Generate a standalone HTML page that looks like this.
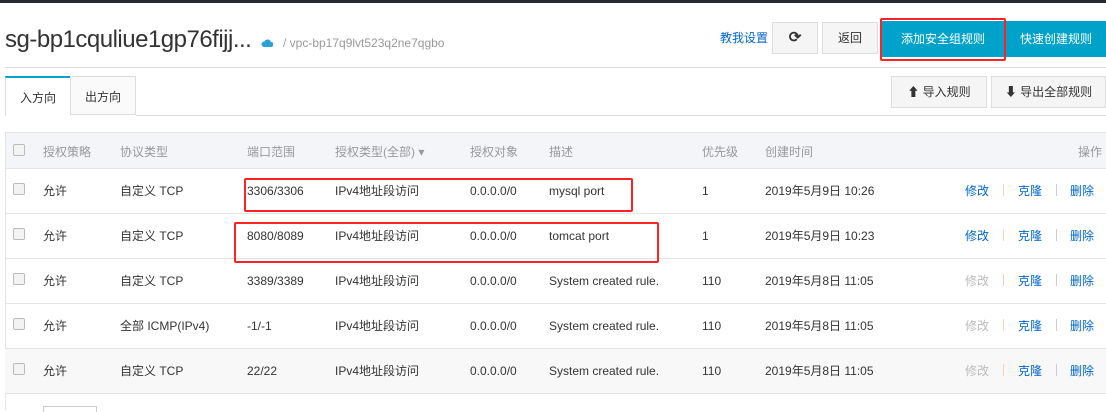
<!DOCTYPE html>
<html><head><meta charset="utf-8"><style>
*{margin:0;padding:0;box-sizing:border-box}
body{width:1106px;height:410px;overflow:hidden;background:#fff;font-family:"Liberation Sans","Noto Sans CJK SC",sans-serif;font-size:12px;color:#333;position:relative}
.a{position:absolute;white-space:nowrap}
.btn{position:absolute;border:1px solid #ddd;background:#f5f5f5;text-align:center;color:#333;font-size:12px}
.row{position:absolute;left:5px;width:1101px;height:45px;border-bottom:1px solid #e2e4e8}
.cb{position:absolute;left:8px;width:12px;height:12px;border:1px solid #bbb;border-radius:2px;background:#f3f3f3}
.c{position:absolute;top:13px;height:18px;line-height:18px;white-space:nowrap}
.lk{color:#06c}
.dis{color:#bbb}
.sep{position:absolute;top:15px;width:1px;height:12px}
.red{position:absolute;border:2px solid #f22;border-radius:2px}
</style></head><body>
<div class="a" style="left:0;top:0;width:1106px;height:3px;background:#262b33"></div>
<div class="a" style="left:5px;top:26px;font-size:24px;letter-spacing:-0.5px;color:#333">sg-bp1cquliue1gp76fijj...</div>
<svg class="a" style="left:261px;top:38px" width="12" height="9" viewBox="0 0 12 9"><path d="M3 9h7a2.5 2.5 0 0 0 0-5 3.5 3.5 0 0 0-6.5-.5A2.7 2.7 0 0 0 3 9z" fill="#2aa0d8"/></svg>
<div class="a" style="left:283px;top:36px;font-size:12px;color:#999">/ vpc-bp17q9lvt523q2ne7qgbo</div>
<div class="a lk" style="left:720px;top:29px;font-size:12px">教我设置</div>
<div class="btn" style="left:772px;top:22px;width:46px;height:32px;line-height:30px;font-size:15px;font-weight:bold">⟳</div>
<div class="btn" style="left:822px;top:22px;width:56px;height:32px;line-height:30px">返回</div>
<div class="a" style="left:882px;top:21px;width:122px;height:36px;background:#00a2ca;color:#fff;text-align:center;line-height:36px;font-size:12px">添加安全组规则</div>
<div class="a" style="left:1006px;top:21px;width:100px;height:36px;background:#00a2ca;color:#fff;text-align:center;line-height:36px;font-size:12px">快速创建规则</div>
<div class="red" style="left:880px;top:18px;width:126px;height:43px"></div>
<div class="a" style="left:5px;top:67px;width:1101px;height:1px;background:#ddd"></div>
<div class="a" style="left:5px;top:76px;width:65px;height:40px;border-top:2px solid #00a2ca;border-left:1px solid #ddd;background:#fff;text-align:center;line-height:40px">入方向</div>
<div class="a" style="left:70px;top:76px;width:66px;height:39px;border:1px solid #ddd;background:#fafafa;text-align:center;line-height:40px">出方向</div>
<div class="a" style="left:136px;top:115px;width:970px;height:1px;background:#ddd"></div>
<div class="btn" style="left:891px;top:76px;width:96px;height:32px;line-height:30px">⬆ 导入规则</div>
<div class="btn" style="left:991px;top:76px;width:115px;height:32px;line-height:30px">⬇ 导出全部规则</div>
<div class="a" style="left:5px;top:132px;width:1101px;height:37px;background:#f4f5f9;border-top:1px solid #e2e4e8;border-bottom:1px solid #e2e4e8;color:#999">
<div class="cb" style="top:11px"></div>
<div class="c" style="left:38px;top:10px">授权策略</div><div class="c" style="left:115px;top:10px">协议类型</div><div class="c" style="left:242px;top:10px">端口范围</div><div class="c" style="left:330px;top:10px">授权类型(全部) ▾</div><div class="c" style="left:465px;top:10px">授权对象</div><div class="c" style="left:544px;top:10px">描述</div><div class="c" style="left:697px;top:10px">优先级</div><div class="c" style="left:760px;top:10px">创建时间</div><div class="c" style="left:1073px;top:10px">操作</div>
</div>
<div class="a" style="left:5px;top:132px;width:1px;height:278px;background:#e2e4e8"></div>

<div class="row" style="top:169px"><div class="cb" style="top:14px"></div><div class="c" style="left:38px">允许</div><div class="c" style="left:115px">自定义 TCP</div><div class="c" style="left:242px">3306/3306</div><div class="c" style="left:330px">IPv4地址段访问</div><div class="c" style="left:465px">0.0.0.0/0</div><div class="c" style="left:544px">mysql port</div><div class="c" style="left:697px">1</div><div class="c" style="left:760px">2019年5月9日 10:26</div><div class="c lk" style="left:960px">修改</div><div class="sep" style="left:998px;background:#f4d0c0"></div><div class="c lk" style="left:1013px">克隆</div><div class="sep" style="left:1051px;background:#ccd"></div><div class="c lk" style="left:1065px">删除</div></div>
<div class="row" style="top:214px"><div class="cb" style="top:14px"></div><div class="c" style="left:38px">允许</div><div class="c" style="left:115px">自定义 TCP</div><div class="c" style="left:242px">8080/8089</div><div class="c" style="left:330px">IPv4地址段访问</div><div class="c" style="left:465px">0.0.0.0/0</div><div class="c" style="left:544px">tomcat port</div><div class="c" style="left:697px">1</div><div class="c" style="left:760px">2019年5月9日 10:23</div><div class="c lk" style="left:960px">修改</div><div class="sep" style="left:998px;background:#f4d0c0"></div><div class="c lk" style="left:1013px">克隆</div><div class="sep" style="left:1051px;background:#ccd"></div><div class="c lk" style="left:1065px">删除</div></div>
<div class="row" style="top:259px"><div class="cb" style="top:14px"></div><div class="c" style="left:38px">允许</div><div class="c" style="left:115px">自定义 TCP</div><div class="c" style="left:242px">3389/3389</div><div class="c" style="left:330px">IPv4地址段访问</div><div class="c" style="left:465px">0.0.0.0/0</div><div class="c" style="left:544px">System created rule.</div><div class="c" style="left:697px">110</div><div class="c" style="left:760px">2019年5月8日 11:05</div><div class="c dis" style="left:960px">修改</div><div class="sep" style="left:998px;background:#f4d0c0"></div><div class="c lk" style="left:1013px">克隆</div><div class="sep" style="left:1051px;background:#ccd"></div><div class="c lk" style="left:1065px">删除</div></div>
<div class="row" style="top:304px"><div class="cb" style="top:14px"></div><div class="c" style="left:38px">允许</div><div class="c" style="left:115px">全部 ICMP(IPv4)</div><div class="c" style="left:242px">-1/-1</div><div class="c" style="left:330px">IPv4地址段访问</div><div class="c" style="left:465px">0.0.0.0/0</div><div class="c" style="left:544px">System created rule.</div><div class="c" style="left:697px">110</div><div class="c" style="left:760px">2019年5月8日 11:05</div><div class="c dis" style="left:960px">修改</div><div class="sep" style="left:998px;background:#f4d0c0"></div><div class="c lk" style="left:1013px">克隆</div><div class="sep" style="left:1051px;background:#ccd"></div><div class="c lk" style="left:1065px">删除</div></div>
<div class="row" style="top:349px;background:#f8f8f8"><div class="cb" style="top:14px"></div><div class="c" style="left:38px">允许</div><div class="c" style="left:115px">自定义 TCP</div><div class="c" style="left:242px">22/22</div><div class="c" style="left:330px">IPv4地址段访问</div><div class="c" style="left:465px">0.0.0.0/0</div><div class="c" style="left:544px">System created rule.</div><div class="c" style="left:697px">110</div><div class="c" style="left:760px">2019年5月8日 11:05</div><div class="c dis" style="left:960px">修改</div><div class="sep" style="left:998px;background:#f4d0c0"></div><div class="c lk" style="left:1013px">克隆</div><div class="sep" style="left:1051px;background:#ccd"></div><div class="c lk" style="left:1065px">删除</div></div>
<div class="a" style="left:43px;top:406px;width:54px;height:6px;border:1px solid #ccc;border-bottom:none"></div>

<div class="red" style="left:244px;top:178px;width:389px;height:34px"></div>
<div class="red" style="left:234px;top:222px;width:425px;height:41px"></div>
</body></html>
